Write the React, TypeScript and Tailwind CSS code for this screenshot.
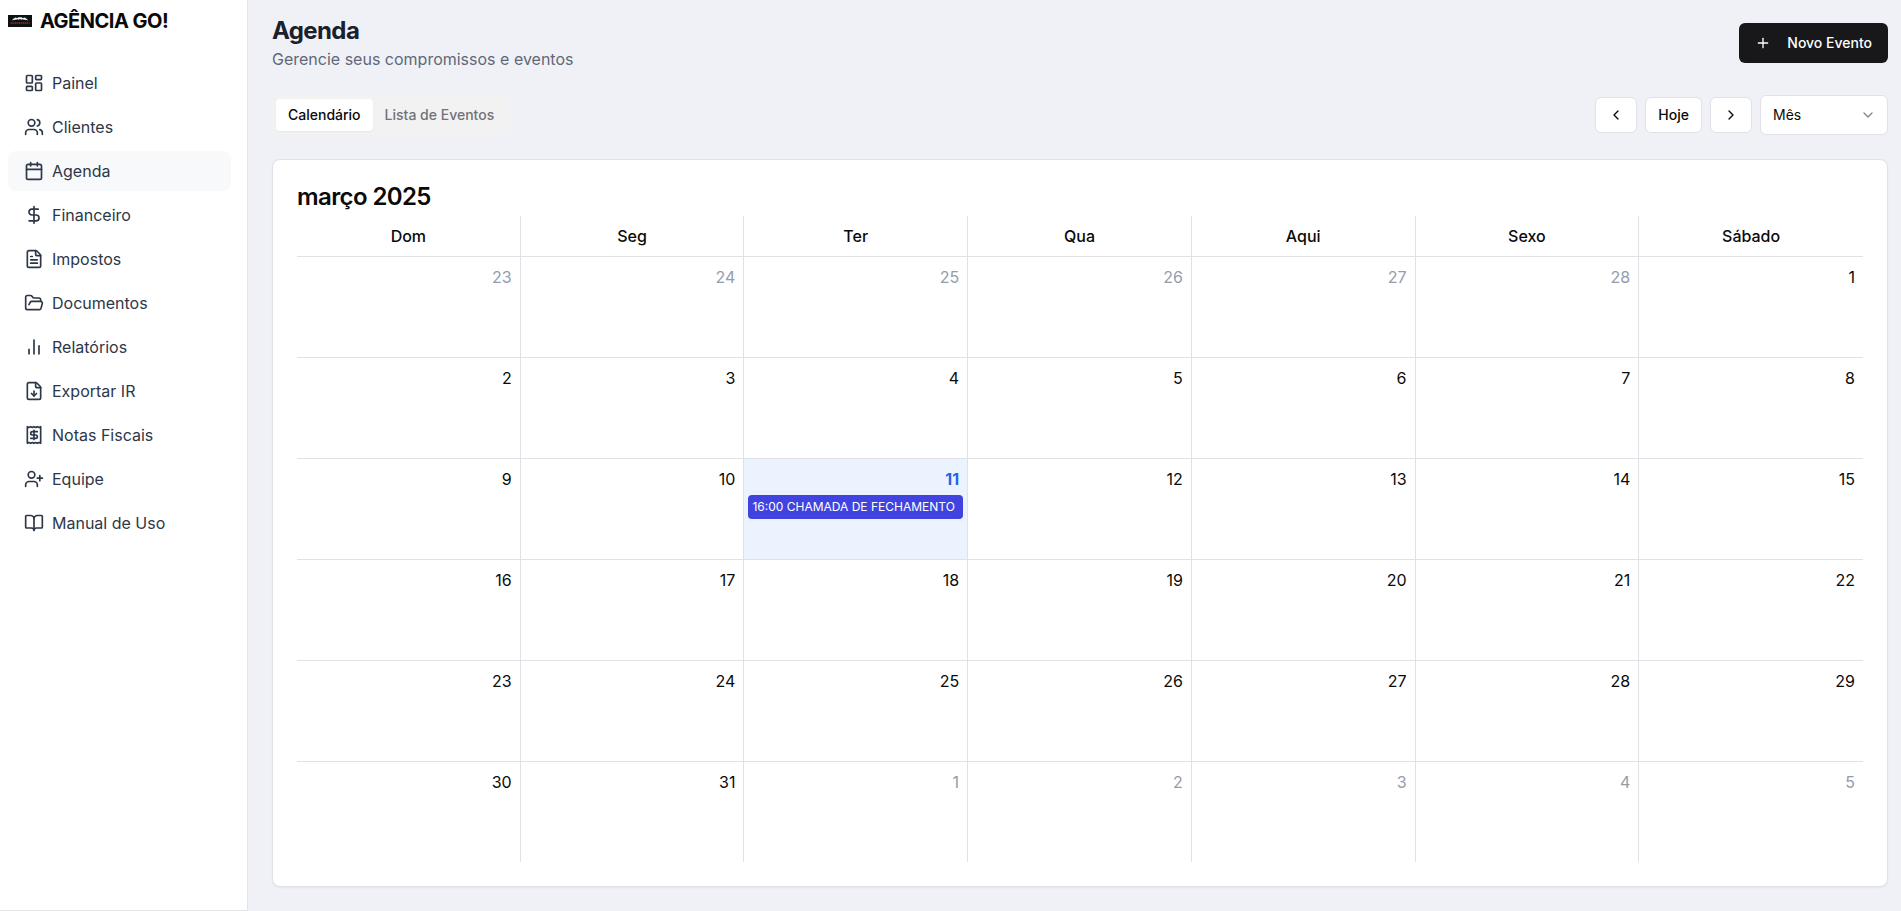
import {
  BookOpen,
  Calendar,
  ChevronDown,
  ChevronLeft,
  ChevronRight,
  DollarSign,
  FileDown,
  FileText,
  FolderOpen,
  LayoutDashboard,
  Plus,
  UserPlus,
  Users,
} from 'lucide-react';
import { useState } from 'react';
import type { ReactNode } from 'react';

const BarChart = () => (
  <svg width="20" height="20" viewBox="0 0 24 24" fill="none" stroke="currentColor" strokeWidth="2" strokeLinejoin="round">
    <path d="M18 21V10" />
    <path d="M12 21V3" />
    <path d="M6 21v-7" />
  </svg>
);

const ReceiptIcon = () => (
  <svg width="20" height="20" viewBox="0 0 24 24" fill="none" stroke="currentColor" strokeWidth="2" strokeLinecap="round" strokeLinejoin="round">
    <path d="M4 2v20l2-1 2 1 2-1 2 1 2-1 2 1 2-1 2 1V2l-2 1-2-1-2 1-2-1-2 1-2-1-2 1Z" />
    <path d="M16 8h-6a2 2 0 1 0 0 4h4a2 2 0 1 1 0 4H8" />
    <path d="M12 17.5v-11" />
  </svg>
);

const Logo = () => (
  <svg width="24" height="12" viewBox="0 0 24 12" className="shrink-0">
    <rect width="24" height="12" fill="#0b1214" />
    <path
      d="M4 5.500c1-1.600 2.500-2.600 4-2.900l1 .6 1.500-1h3l1.500 1 1-.6c1.500.3 3 1.300 4 2.900-1.400-.8-2.700-1-4-.7l-1.500-.6-1 .6-1.500-.7-1.500.7-1-.6-1.500.6c-1.300-.3-2.600-.1-4 .7Z"
      fill="#f4f4f4"
    />
    <path d="M2.500 8h19" stroke="#7a1f1a" strokeWidth="2" strokeDasharray="1.500 .5" />
  </svg>
);

const navItems: { label: string; icon: ReactNode }[] = [
  { label: 'Painel', icon: <LayoutDashboard size={20} /> },
  { label: 'Clientes', icon: <Users size={20} /> },
  { label: 'Agenda', icon: <Calendar size={20} /> },
  { label: 'Financeiro', icon: <DollarSign size={20} /> },
  { label: 'Impostos', icon: <FileText size={20} /> },
  { label: 'Documentos', icon: <FolderOpen size={20} /> },
  { label: 'Relatórios', icon: <BarChart /> },
  { label: 'Exportar IR', icon: <FileDown size={20} /> },
  { label: 'Notas Fiscais', icon: <ReceiptIcon /> },
  { label: 'Equipe', icon: <UserPlus size={20} /> },
  { label: 'Manual de Uso', icon: <BookOpen size={20} /> },
];

const weekDays = ['Dom', 'Seg', 'Ter', 'Qua', 'Aqui', 'Sexo', 'Sábado'];

const TODAY = 11;

// six weeks, starting on sunday 23 feb 2025
const weeks = Array.from({ length: 6 }, (_, w) =>
  Array.from({ length: 7 }, (_, d) => {
    const date = new Date(2025, 1, 23 + w * 7 + d);
    return { day: date.getDate(), current: date.getMonth() === 2 };
  })
);

const Sidebar = () => (
  <aside className="w-62 shrink-0 bg-white border-r border-b border-[#e2e2e9]">
    <div className="flex items-center gap-2 px-2 pt-[7px]">
      <Logo />
      <span className="text-xl font-bold tracking-tight text-[#0a0a0a]">AGÊNCIA GO!</span>
    </div>
    <nav className="flex flex-col gap-1 pl-2 pr-4 pt-7">
      {navItems.map((item) => (
        <a
          key={item.label}
          href="#"
          className={`flex items-center gap-2 h-10 px-4 rounded-lg text-[#2d3748] ${
            item.label === 'Agenda' ? 'bg-[#f7f9fb]' : ''
          }`}
        >
          {item.icon}
          {item.label}
        </a>
      ))}
    </nav>
  </aside>
);

const MonthGrid = () => (
  <table className="w-full table-fixed border-separate border-spacing-0">
    <thead>
      <tr>
        {weekDays.map((day) => (
          <th key={day} className="h-[41px] p-0 border-b border-r last:border-r-0 border-[#e1e1e7] font-medium text-center">
            {day}
          </th>
        ))}
      </tr>
    </thead>
    <tbody>
      {weeks.map((week, i) => (
        <tr key={i} className="group">
          {week.map(({ day, current }) => {
            const isToday = current && day === TODAY;
            return (
              <td
                key={day}
                className={`h-[101px] group-last:h-[100px] align-top p-1 border-b group-last:border-b-0 border-r last:border-r-0 border-[#e1e1e7] ${
                  isToday ? 'bg-[#ebf3ff]' : ''
                }`}
              >
                <div
                  className={`p-1 text-right leading-6 ${
                    isToday ? 'font-bold text-[#2563eb]' : current ? 'text-[#0a0a0a]' : 'text-[#949cac]'
                  }`}
                >
                  {day}
                </div>
                {isToday && (
                  <button className="block w-full h-6 px-1 rounded bg-[#4043df] text-white text-xs text-left truncate">
                    16:00 CHAMADA DE FECHAMENTO
                  </button>
                )}
              </td>
            );
          })}
        </tr>
      ))}
    </tbody>
  </table>
);

const outlineButton =
  'h-9 px-3 rounded-md border border-[#e1e1e7] bg-white text-sm font-medium flex items-center justify-center';

const App = () => {
  const [view, setView] = useState('mes');

  return (
    <div className="flex min-h-screen bg-[#f0f1f6] font-['Inter',sans-serif] text-base text-[#0a0a0a]">
      <Sidebar />
      <main className="flex-1 min-w-0 flex flex-col gap-6 pl-6 pr-[13px] pt-[15px] pb-6">
        <header className="flex items-center justify-between">
          <div>
            <h1 className="text-2xl font-bold tracking-tight text-[#1a202c]">Agenda</h1>
            <p className="text-[#5f6879]">Gerencie seus compromissos e eventos</p>
          </div>
          <button className="flex items-center gap-4 h-10 px-4 rounded-md bg-[#18181b] text-white text-sm font-medium">
            <Plus size={16} />
            Novo Evento
          </button>
        </header>

        <div className="flex items-center justify-between">
          <div role="tablist" className="flex items-center h-10 p-1 rounded-md bg-[#f2f2f2] text-sm font-medium">
            <button role="tab" aria-selected="true" className="h-8 px-3 rounded-sm bg-white shadow-xs">
              Calendário
            </button>
            <button role="tab" aria-selected="false" className="h-8 px-3 rounded-sm text-[#71717a]">
              Lista de Eventos
            </button>
          </div>
          <div className="flex items-center gap-2">
            <button aria-label="Anterior" className={outlineButton}>
              <ChevronLeft size={16} />
            </button>
            <button className={outlineButton}>Hoje</button>
            <button aria-label="Próximo" className={outlineButton}>
              <ChevronRight size={16} />
            </button>
            <div className="relative">
              <select
                aria-label="Visualização"
                value={view}
                onChange={(e) => setView(e.target.value)}
                className="appearance-none w-32 h-10 px-3 rounded-md border border-[#e1e1e7] bg-white text-sm"
              >
                <option value="mes">Mês</option>
                <option value="semana">Semana</option>
                <option value="dia">Dia</option>
              </select>
              <ChevronDown size={16} className="absolute right-3 top-3 text-[#858585] pointer-events-none" />
            </div>
          </div>
        </div>

        <section className="p-6 rounded-lg border border-[#e1e1e7] bg-white shadow-xs">
          <h2 className="h-8 text-2xl leading-[26px] font-semibold tracking-tight">março 2025</h2>
          <MonthGrid />
        </section>
      </main>
    </div>
  );
};

export default App;
